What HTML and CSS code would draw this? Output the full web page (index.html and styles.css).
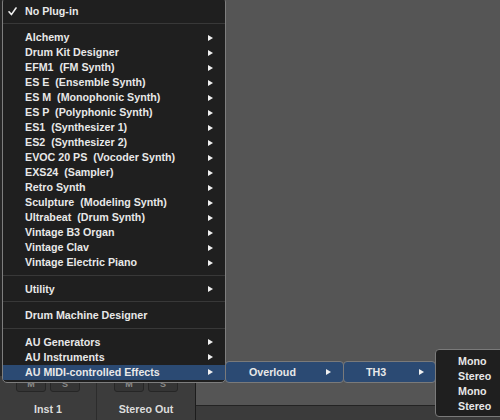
FILE: index.html
```html
<!DOCTYPE html>
<html>
<head>
<meta charset="utf-8">
<link rel="stylesheet" href="styles.css">
</head>
<body>
<div class="app">
  <div class="mixer">
    <div class="strips">
      <div class="strip">
        <div class="btns"><span class="btn">M</span><span class="btn">S</span></div>
        <div class="name">Inst 1</div>
      </div>
      <div class="strip">
        <div class="btns"><span class="btn">M</span><span class="btn">S</span></div>
        <div class="name">Stereo Out</div>
      </div>
    </div>
  </div>
  <div class="main">
    <div class="canvas"></div>
    <div class="footer"></div>
  </div>
</div>

<div class="menu">
  <div class="item"><span class="check"><svg width="9" height="9" viewBox="0 0 9 9"><path d="M1 4.8 L3.4 7.6 L8 1" fill="none" stroke="#eee" stroke-width="1.6" stroke-linecap="round" stroke-linejoin="round"/></svg></span><span class="label">No Plug-in</span><span></span></div>
  <div class="sep"></div>
  <div class="item"><span></span><span class="label">Alchemy</span><span class="arrow"></span></div>
  <div class="item"><span></span><span class="label">Drum Kit Designer</span><span class="arrow"></span></div>
  <div class="item"><span></span><span class="label">EFM1  (FM Synth)</span><span class="arrow"></span></div>
  <div class="item"><span></span><span class="label">ES E  (Ensemble Synth)</span><span class="arrow"></span></div>
  <div class="item"><span></span><span class="label">ES M  (Monophonic Synth)</span><span class="arrow"></span></div>
  <div class="item"><span></span><span class="label">ES P  (Polyphonic Synth)</span><span class="arrow"></span></div>
  <div class="item"><span></span><span class="label">ES1  (Synthesizer 1)</span><span class="arrow"></span></div>
  <div class="item"><span></span><span class="label">ES2  (Synthesizer 2)</span><span class="arrow"></span></div>
  <div class="item"><span></span><span class="label">EVOC 20 PS  (Vocoder Synth)</span><span class="arrow"></span></div>
  <div class="item"><span></span><span class="label">EXS24  (Sampler)</span><span class="arrow"></span></div>
  <div class="item"><span></span><span class="label">Retro Synth</span><span class="arrow"></span></div>
  <div class="item"><span></span><span class="label">Sculpture  (Modeling Synth)</span><span class="arrow"></span></div>
  <div class="item"><span></span><span class="label">Ultrabeat  (Drum Synth)</span><span class="arrow"></span></div>
  <div class="item"><span></span><span class="label">Vintage B3 Organ</span><span class="arrow"></span></div>
  <div class="item"><span></span><span class="label">Vintage Clav</span><span class="arrow"></span></div>
  <div class="item"><span></span><span class="label">Vintage Electric Piano</span><span class="arrow"></span></div>
  <div class="sep"></div>
  <div class="item"><span></span><span class="label">Utility</span><span class="arrow"></span></div>
  <div class="sep"></div>
  <div class="item"><span></span><span class="label">Drum Machine Designer</span><span></span></div>
  <div class="sep"></div>
  <div class="item"><span></span><span class="label">AU Generators</span><span class="arrow"></span></div>
  <div class="item"><span></span><span class="label">AU Instruments</span><span class="arrow"></span></div>
  <div class="item active"><span></span><span class="label">AU MIDI-controlled Effects</span><span class="arrow"></span></div>
</div>

<div class="submenu sub1">
  <div class="subitem"><span class="label">Overloud</span><span class="arrow"></span></div>
</div>
<div class="submenu sub2">
  <div class="subitem"><span class="label">TH3</span><span class="arrow"></span></div>
</div>
<div class="submenu sub3">
  <div class="plain">Mono</div>
  <div class="plain">Stereo</div>
  <div class="plain">Mono</div>
  <div class="plain">Stereo</div>
</div>
</body>
</html>
```

FILE: styles.css
```css
* { box-sizing: border-box; }

body {
  margin: 0;
  width: 500px;
  height: 420px;
  overflow: hidden;
  position: relative;
  background: #555555;
  font-family: "Liberation Sans", Arial, sans-serif;
}

.app {
  display: grid;
  grid-template-columns: 196px 1fr;
  height: 420px;
}

.mixer {
  background: #262626;
  border-right: 1px solid #1c1c1c;
  display: flex;
  flex-direction: column;
  justify-content: flex-end;
}

.strips {
  display: flex;
  height: 44px;
}

.strip {
  display: flex;
  flex-direction: column;
  align-items: center;
  padding-top: 1px;
  background: #3c3c3c;
}

.strip:first-child {
  width: 97px;
  border-right: 1px solid #2c2c2c;
}

.strip:last-child {
  flex: 1;
}

.btns {
  display: flex;
  gap: 4px;
}

.btn {
  width: 30px;
  height: 15px;
  border: 1px solid #262626;
  border-radius: 3px;
  background: #353535;
  color: #8c8c8c;
  font-size: 9px;
  font-weight: bold;
  line-height: 13px;
  text-align: center;
}

.name {
  margin-top: 11px;
  color: #dcdcdc;
  font-size: 10.7px;
  font-weight: bold;
}

.main {
  display: flex;
  flex-direction: column;
}

.canvas {
  flex: 1;
  background: #555555;
}

.footer {
  height: 15px;
  background: #3b3b3b;
  border-top: 1px solid #232323;
}

/* popup menu */
.menu {
  position: absolute;
  left: 2px;
  top: -3px;
  width: 224px;
  padding: 5.5px 0 2.5px;
  background: #1f1f1f;
  border: 1px solid #7e7e7e;
  border-radius: 5px;
  color: #e8e8e8;
  font-size: 10.7px;
  font-weight: bold;
}

.item {
  display: grid;
  grid-template-columns: 22px 1fr 17px;
  align-items: center;
  height: 15px;
  line-height: 15px;
}

.item.active {
  background: #2b4a73;
}

.label {
  white-space: pre;
}

.check {
  display: flex;
  justify-content: flex-end;
  padding-right: 8px;
}

.check svg { display: block; }

.arrow {
  width: 0;
  height: 0;
  border-left: 5px solid #f0f0f0;
  border-top: 3.5px solid transparent;
  border-bottom: 3.5px solid transparent;
}

.sep {
  height: 11.5px;
  display: flex;
  align-items: center;
}

.sep::before {
  content: "";
  flex: 1;
  height: 1px;
  background: #383838;
  margin-top: -1px;
}

.submenu {
  position: absolute;
  border: 1px solid #7a7a7a;
  border-radius: 4px;
  color: #e8e8e8;
  font-size: 10.7px;
  font-weight: bold;
}

.sub1 {
  left: 225px;
  top: 361px;
  width: 119px;
  height: 22px;
  background: #2b4a73;
}

.sub2 {
  left: 343px;
  top: 361px;
  width: 93px;
  height: 22px;
  background: #2b4a73;
}

.subitem {
  display: flex;
  align-items: center;
  justify-content: space-between;
  height: 20px;
}

.sub1 .subitem { padding: 0 12px 0 23px; }
.sub2 .subitem { padding: 0 11px 0 22px; }

.sub3 {
  left: 435px;
  top: 349px;
  width: 80px;
  height: 68px;
  background: #1f1f1f;
  padding-top: 3.5px;
}

.plain {
  height: 15px;
  line-height: 15px;
  padding-left: 22px;
}
```
